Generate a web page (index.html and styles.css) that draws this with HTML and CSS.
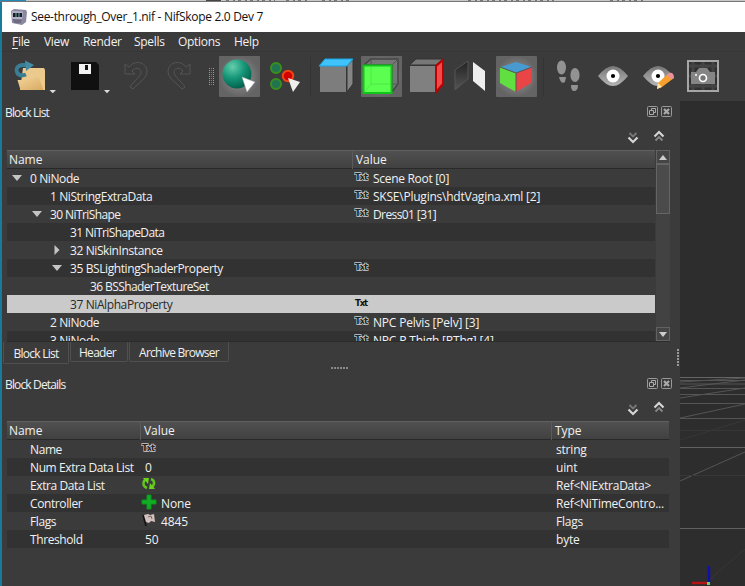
FILE: index.html
```
<!DOCTYPE html>
<html lang="en">
<head>
<meta charset="utf-8">
<title>See-through_Over_1.nif - NifSkope 2.0 Dev 7</title>
<link rel="stylesheet" href="styles.css">
</head>
<body>
<svg width="0" height="0" class="defs">
  <defs>
    <radialGradient id="pressed"><stop offset="0" stop-color="#999"/><stop offset="1" stop-color="#646464"/></radialGradient>
    <radialGradient id="ball" cx=".35" cy=".25" r=".8"><stop offset="0" stop-color="#65cfae"/><stop offset=".5" stop-color="#169678"/><stop offset="1" stop-color="#005c49"/></radialGradient>
    <linearGradient id="metal" x2="0" y2="1"><stop offset="0" stop-color="#777"/><stop offset="1" stop-color="#b5b5b5"/></linearGradient>
    <linearGradient id="dark" x2="0" y2="1"><stop offset="0" stop-color="#222"/><stop offset="1" stop-color="#555"/></linearGradient>
    <linearGradient id="folder" x2="1" y2="1"><stop offset="0" stop-color="#f2d49a"/><stop offset="1" stop-color="#d9aa62"/></linearGradient>
    <symbol id="txt" viewBox="0 0 16 12"><text x="1" y="9" class="txt-outline" textLength="13">Txt</text></symbol>
    <symbol id="txt-plain" viewBox="0 0 16 12"><text x="1" y="9" class="txt-plain" textLength="13">Txt</text></symbol>
    <symbol id="float" viewBox="0 0 11 11"><rect x=".5" y=".5" width="10" height="10" rx="1" fill="none" stroke="#999"/><path d="M4.500 4V2.500H8.500V6.500H7M2.500 4.500H6.500V8.500H2.500Z" fill="none" stroke="#aaa"/></symbol>
    <symbol id="close" viewBox="0 0 11 11"><rect x=".5" y=".5" width="10" height="10" rx="1" fill="none" stroke="#999"/><path d="M3 3L8 8M8 3L3 8" stroke="#aaa" stroke-width="2.200"/></symbol>
    <symbol id="down" viewBox="0 0 12 12"><path d="M2.500 1L6 4.500L9.500 1" fill="none" stroke="#777" stroke-width="1.800"/><path d="M1.500 5.500L6 10L10.500 5.500" fill="none" stroke="#d5d5d5" stroke-width="2.200"/></symbol>
    <symbol id="up" viewBox="0 0 12 12"><path d="M2.500 10.500L6 7L9.500 10.500" fill="none" stroke="#888" stroke-width="1.800"/><path d="M1.500 6.500L6 2L10.500 6.500" fill="none" stroke="#d5d5d5" stroke-width="2.200"/></symbol>
    <symbol id="expanded" viewBox="0 0 10 8"><path d="M0 1H10L5 7Z" fill="#c4c4c4"/></symbol>
    <symbol id="collapsed" viewBox="0 0 10 10"><path d="M2.500 0V10L7.500 5Z" fill="#c4c4c4"/></symbol>
  </defs>
</svg>
<div class="desktop">
  <svg class="behind" width="745" height="2"><rect width="745" height="2" fill="#c8c9c6"/><path d="M206 0H221V2H206Z" fill="#46454a"/><path d="M0 0H26V2H0Z" fill="#2389b9"/><path d="M226 .5H275M286 .5H308M322 .5H350M468 .5H554M610 .5H643" stroke="#777" stroke-dasharray="3 4 2 3"/><path d="M0 1.500H745" stroke="#777"/></svg>
  <div class="window">
    <header class="titlebar">
      <svg width="18" height="18" viewBox="0 0 18 18"><path d="M1 3L4 1L16 2L17 4L16 14L12 17L2 15Z" fill="#8a87a0"/><path d="M2 3L13 3.500L12 12L2 11Z" fill="#b5b2c5"/><path d="M3 5L12 5V9L3 9Z" fill="#111e24"/><path d="M6 5V9M9 5V9" stroke="#79a7a5"/><path d="M3 12H12M4 14H11" stroke="#545064"/></svg>
      <span>See-through_Over_1.nif - NifSkope 2.0 Dev 7</span>
    </header>
    <nav class="menu"><span class="m1"><u>F</u>ile</span><span class="m2">View</span><span class="m3">Render</span><span class="m4">Spells</span><span class="m5">Options</span><span class="m6">Help</span></nav>
    <div class="toolbar">
      <svg width="57" height="49" viewBox="2 52 57 49"><path d="M23 68H44L45 70V90H20Z" fill="#ecca8e"/><path d="M17.500 80H29L31 77.500H39L43.500 90H20.500Z" fill="url(#folder)"/><path d="M26 74.500C17 78 14 69 19 66C22 64 25 65 28 65.500" fill="none" stroke="#397e94" stroke-width="4"/><path d="M25 60.500L34 65L26 71Z" fill="#438ca3"/><path d="M49.500 90H56L52.800 93.300Z" fill="#ddd"/></svg>
      <svg width="54" height="49" viewBox="59 52 54 49"><path d="M71 62H96L99 65V90H71Z" fill="#101010"/><path d="M79 64H91V74H79Z" fill="#f2f2f2"/><path d="M85 65H88V70H85Z" fill="#111"/><path d="M104 90H110L107 93.300Z" fill="#ddd"/></svg>
      <svg width="45" height="49" viewBox="113 52 45 49"><path d="M125 64V74H135L132 71C136 66 142 69 141 73C140 77 134 81 130 87L133 89C138 83 147 79 147 71C146 61 134 60 129 67Z" fill="none" stroke="#555"/></svg>
      <svg width="44" height="49" viewBox="158 52 44 49"><path d="M190 64V74H180L183 71C179 66 173 69 174 73C175 77 181 81 185 87L182 89C177 83 168 79 168 71C169 61 181 60 186 67Z" fill="none" stroke="#555"/></svg>
      <svg width="17" height="49" viewBox="202 52 17 49"><path d="M209.500 68V86M213.500 68V86" stroke="#999" stroke-dasharray="1 1"/><path d="M211.500 68V86" stroke="#777" stroke-dasharray="1 1"/></svg>
      <svg width="42" height="49" viewBox="219 52 42 49"><rect x="219" y="56" width="41" height="41" rx="1" fill="url(#pressed)"/><circle cx="237" cy="74" r="14.500" fill="url(#ball)"/><path d="M242 77L255 82L247 92Z" fill="#fff" stroke="#aaa" stroke-width=".5"/></svg>
      <svg width="51" height="49" viewBox="261 52 51 49"><circle cx="276" cy="68" r="5" fill="#217354" stroke="#38901b" stroke-width="2"/><circle cx="276" cy="84" r="5" fill="#217354" stroke="#38901b" stroke-width="2"/><circle cx="288" cy="76" r="5.200" fill="#d30000" stroke="#f04412" stroke-width="2"/><path d="M288 78L300 82L293 92Z" fill="#eee"/><path d="M310.500 57V96" stroke="#343434"/></svg>
      <svg width="46" height="49" viewBox="312 52 46 49"><path d="M347 66L353 59V84L347 92Z" fill="#858585" stroke="#333"/><path d="M320 66H346V92H320Z" fill="#7d7d7d"/><path d="M319 66L325 59H353L347 66Z" fill="#40c2fa" stroke="#16a4e3"/></svg>
      <svg width="47" height="49" viewBox="358 52 47 49"><rect x="361" y="56" width="41" height="41" rx="1" fill="url(#pressed)"/><path d="M364 65L371 59H398V84L392 92V65Z" fill="#777" stroke="#444" stroke-width="1.500"/><path d="M371 60V84H398M371 84L364 92M398 59L392 65" fill="none" stroke="#555"/><rect x="363.500" y="65.500" width="28" height="27.500" fill="#5aff4f" stroke="#10c51a" stroke-width="2"/><path d="M371 67V84H390M371 84L365 91" stroke="#51e846" fill="none"/></svg>
      <svg width="45" height="49" viewBox="405 52 45 49"><path d="M409.500 65L416 59H443L436 65Z" fill="#777" stroke="#333"/><path d="M410 66H435V92H410Z" fill="#808080"/><path d="M436 66L443 60V84L436 92Z" fill="#f34949" stroke="#bd0000" stroke-width="2"/></svg>
      <svg width="43" height="49" viewBox="450 52 43 49"><path d="M455 70L468 61V79L455 90Z" fill="url(#dark)" stroke="#555"/><path d="M473 62L485 71V91L473 81Z" fill="#eee"/></svg>
      <svg width="51" height="49" viewBox="493 52 51 49"><rect x="496" y="56" width="41" height="41" rx="1" fill="url(#pressed)"/><path d="M500 67L516 62L532 67L516 73Z" fill="#479bd0"/><path d="M500 67L516 73V92L500 83Z" fill="#61df40"/><path d="M532 67L516 73V92L531 83Z" fill="#e94446"/><path d="M500 67L516 73L532 67M516 73V92" stroke="#555" fill="none"/><path d="M543.500 57V96" stroke="#343434"/></svg>
      <svg width="45" height="49" viewBox="544 52 45 49" fill="#929292"><ellipse cx="561.500" cy="67.500" rx="4.500" ry="7"/><path d="M559 77L566 77L565 82Q561 85 559 77Z"/><ellipse cx="575" cy="75" rx="4.600" ry="7"/><path d="M571 85H578Q578 91 574 91Q571 91 571 85Z"/></svg>
      <svg width="48" height="49" viewBox="589 52 48 49"><path d="M598 76Q606 66 613 66Q620 66 628 76Q620 86 613 86Q606 86 598 76Z" fill="url(#metal)"/><circle cx="613" cy="76" r="6.500" fill="#fff"/><circle cx="613" cy="76" r="2.100"/></svg>
      <svg width="44" height="49" viewBox="637 52 44 49"><path d="M643 76Q651 66 658 66Q665 66 673 76Q665 86 658 86Q651 86 643 76Z" fill="url(#metal)"/><circle cx="658" cy="76" r="6.500" fill="#fff"/><circle cx="658" cy="76" r="2.100"/><path d="M657 89L658 83L669 73L674 78L662 87Z" fill="#f7a02d"/><path d="M669 73Q674 72 674 78L671 79L667 75Z" fill="#e9929c"/><path d="M657 89L658 83L662 87Z" fill="#ffe3aa"/></svg>
      <svg width="64" height="49" viewBox="681 52 64 49"><rect x="688" y="61" width="30" height="30" fill="#303030"/><path d="M693 62V90M703 62V90M713 62V90M689 66H717M689 76H717M689 86H717" stroke="#444" stroke-width="3"/><rect x="688" y="61" width="30" height="30" fill="none" stroke="#a6a6a6" stroke-width="2"/><path d="M691 72H696L699 68H707L710 72H715V84H691Z" fill="#858585"/><circle cx="703" cy="78" r="3.500" fill="#777" stroke="#fff" stroke-width="1.700"/><circle cx="696" cy="75" r="1" fill="#fff"/></svg>
    </div>
    <main class="body">
      <section class="docks">
        <div class="dockhead first"><span>Block List</span><svg width="11" height="11"><use href="#float"/></svg><svg width="11" height="11"><use href="#close"/></svg></div>
        <div class="arrows a1"><svg width="12" height="12"><use href="#down"/></svg><svg width="12" height="12"><use href="#up"/></svg></div>
        <div class="list">
          <div class="tree">
            <div class="th"><span>Name</span><span>Value</span></div>
            <div class="row"><div class="lv0"><svg width="10" height="8"><use href="#expanded"/></svg>0 NiNode</div><div><svg width="16" height="12"><use href="#txt"/></svg>Scene Root [0]</div></div>
            <div class="row"><div class="lv1">1 NiStringExtraData</div><div class="path"><svg width="16" height="12"><use href="#txt"/></svg>SKSE\Plugins\hdtVagina.xml [2]</div></div>
            <div class="row"><div class="lv1 snug"><svg width="10" height="8"><use href="#expanded"/></svg>30 NiTriShape</div><div class="snug"><svg width="16" height="12"><use href="#txt"/></svg>Dress01 [31]</div></div>
            <div class="row"><div class="lv2 snug">31 NiTriShapeData</div><div></div></div>
            <div class="row"><div class="lv2"><svg width="10" height="10"><use href="#collapsed"/></svg>32 NiSkinInstance</div><div></div></div>
            <div class="row"><div class="lv2"><svg width="10" height="8"><use href="#expanded"/></svg>35 BSLightingShaderProperty</div><div><svg width="16" height="12"><use href="#txt"/></svg></div></div>
            <div class="row"><div class="lv3 snug">36 BSShaderTextureSet</div><div></div></div>
            <div class="row selected"><div class="lv2">37 NiAlphaProperty</div><div><svg width="16" height="12"><use href="#txt-plain"/></svg></div></div>
            <div class="row"><div class="lv1">2 NiNode</div><div class="npc"><svg width="16" height="12"><use href="#txt"/></svg>NPC Pelvis [Pelv] [3]</div></div>
            <div class="row"><div class="lv1">3 NiNode</div><div class="npc"><svg width="16" height="12"><use href="#txt"/></svg>NPC R Thigh [RThg] [4]</div></div>
          </div>
          <div class="scroll"><div class="sb"><svg width="8" height="5"><path d="M0 5L4 0L8 5Z" fill="#ccc"/></svg></div><div class="thumb"></div><div class="track"></div><div class="sb"><svg width="8" height="5"><path d="M0 0H8L4 5Z" fill="#ccc"/></svg></div></div>
        </div>
        <div class="tabs"><span class="active">Block List</span><span class="header-tab">Header</span><span class="archive">Archive Browser</span><svg width="3" height="18"><path d="M1 0V18" stroke="#999" stroke-width="2" stroke-dasharray="2 1"/></svg></div>
        <div class="split"><svg width="18" height="2"><path d="M0 1H18" stroke="#888" stroke-width="2" stroke-dasharray="2 1"/></svg></div>
        <div class="dockhead"><span>Block Details</span><svg width="11" height="11"><use href="#float"/></svg><svg width="11" height="11"><use href="#close"/></svg></div>
        <div class="arrows a2"><svg width="12" height="12"><use href="#down"/></svg><svg width="12" height="12"><use href="#up"/></svg></div>
        <div class="details">
          <div class="th"><span>Name</span><span>Value</span><span>Type</span></div>
          <div class="row"><div>Name</div><div><svg width="16" height="12"><use href="#txt"/></svg></div><div>string</div></div>
          <div class="row"><div>Num Extra Data List</div><div class="num">0</div><div>uint</div></div>
          <div class="row"><div>Extra Data List</div><div><svg width="16" height="14" viewBox="0 0 16 14"><path d="M6 11Q1 9 3 4L5 2M10 2Q15 4 12 9L10 11" fill="none" stroke="#5fc61d" stroke-width="2.600"/><path d="M2 1H8L7 7ZM14 12H8L9 6Z" fill="#6bd31f"/></svg></div><div class="ref">Ref&lt;NiExtraData&gt;</div></div>
          <div class="row"><div>Controller</div><div><svg class="plus" width="16" height="16" viewBox="0 0 16 16"><path d="M6 1H10V6H15V10H10V15H6V10H1V6H6Z" fill="#11ae25" stroke="#0c9420"/></svg>None</div><div class="ref">Ref&lt;NiTimeContro...</div></div>
          <div class="row"><div>Flags</div><div><svg width="16" height="14" viewBox="0 0 16 14"><path d="M2 2L5 13" stroke="#111" stroke-width="1.500"/><path d="M3 2L7 1L9 2L13 1L14 9L10 8L8 10L5 9Z" fill="#d4c1be"/><path d="M7 4L10 3L11 6" fill="none" stroke="#746462"/></svg>4845</div><div>Flags</div></div>
          <div class="row"><div>Threshold</div><div class="num">50</div><div>byte</div></div>
        </div>
      </section>
      <svg class="viewport" width="65" height="485" viewBox="680 101 65 485"><path fill="#2d2d2d" d="M680 101H745V586H680Z"/><g fill="none" stroke="#555"><path stroke="#656565" d="M680 377.500H745"/><path d="M680 380.500H745M680 384H745M680 388.500H745M680 394.500H745M680 403.500H745M680 418.500H745"/><path d="M680 382L745 378M680 388L745 380M680 398L745 388M680 418L745 404M680 481L745 452"/><path stroke="#606060" d="M680 447.500H745M680 528.500H745"/><path stroke="#373737" d="M680 430.500H745M680 475.500H745M680 440L745 420M709 580L745 549"/></g><path d="M692 583H707" stroke="#b51212" stroke-width="2.500"/><path d="M709 566V582" stroke="#1010b0" stroke-width="2.500"/><path d="M707 582H710V585H707Z" fill="#62d862"/></svg>
    </main>
  </div>
</div>
</body>
</html>
```
FILE: styles.css
```
* { box-sizing: border-box; }
body { margin: 0; width: 745px; height: 586px; overflow: hidden; background: #3b3b3b; font: 12px/18px "Open Sans", "Noto Sans", sans-serif; color: #f1f1f1; letter-spacing: -0.3px; white-space: nowrap; }
svg { display: block; flex: none; }
.defs { position: absolute; }
.desktop { height: 586px; display: flex; flex-direction: column; }
.window { height: 584px; border-left: 2px solid #197b9c; }
.titlebar { height: 30px; background: #fff; color: #111; display: flex; align-items: center; padding-left: 8px; }
.titlebar span { margin-left: 3px; letter-spacing: -0.32px; }
.menu { height: 20px; line-height: 20px; display: flex; border-bottom: 1px solid #373737; }
.menu u { text-underline-offset: 2px; }
.m1 { width: 32px; margin-left: 10px; }
.m2 { width: 39px; }
.m3 { width: 51px; }
.m4 { width: 44px; }
.m5 { width: 56px; }
.toolbar { height: 49px; display: flex; }
.body { height: 485px; display: flex; }
.docks { width: 678px; }
.dockhead { height: 24px; display: flex; align-items: center; gap: 3px; padding: 0 8px 0 3px; }
.dockhead.first { height: 23px; }
.dockhead span { flex: 1; letter-spacing: -0.85px; padding-top: 1px; }
.dockhead svg { margin-top: -2px; }
.arrows { display: flex; justify-content: flex-end; align-items: center; gap: 14px; padding-right: 15px; height: 26px; }
.arrows.a2 { height: 25px; }
.arrows svg { margin-top: -3px; }
.arrows svg:first-child { margin-top: 2px; }
.list { height: 192px; display: flex; margin: 0 10px 0 5px; border-bottom: 1px solid #2b2b2b; }
.tree { width: 648px; margin-right: 1px; overflow: hidden; }
.th { height: 19px; background: linear-gradient(#505050, #414141); border-top: 1px solid #606060; border-bottom: 1px solid #292929; display: grid; grid-template-columns: 345px 1fr; line-height: 18px; letter-spacing: -0.05px; }
.th span { padding-left: 2px; }
.th span + span { border-left: 1px solid #5b5b5b; padding-left: 3px; }
.row { height: 18px; display: grid; grid-template-columns: 345px 1fr; letter-spacing: -0.4px; }
.row:nth-child(odd) { background: #323232; }
.row > div { display: flex; align-items: center; height: 18px; padding-top: 2px; }
.row > div + div { padding-left: 2px; letter-spacing: -0.3px; }
.row > div + div > svg { margin: -4px 3px 0 0; }
.row > .path { letter-spacing: -0.23px; }
.row > .npc { letter-spacing: -0.2px; }
.row > .snug { letter-spacing: -0.6px; }
.lv0 { padding-left: 23px; }
.lv1 { padding-left: 43px; }
.lv2 { padding-left: 63px; }
.lv3 { padding-left: 83px; }
.tree .row > div:first-child > svg { margin: -3px 8px 0 -18px; }
.tree .row.selected { background: #cacaca; color: #292929; }
.txt-outline { font: bold 8.5px "DejaVu Sans", sans-serif; fill: #222; stroke: #ccc; stroke-width: 1.4px; paint-order: stroke; letter-spacing: 0; }
.txt-plain { font: bold 8.5px "DejaVu Sans", sans-serif; fill: #111; letter-spacing: 0; }
.scroll { width: 14px; display: flex; flex-direction: column; background: #424242; }
.sb { height: 14px; border: 1px solid #626262; display: flex; align-items: center; justify-content: center; background: #454545; }
.thumb { height: 50px; border: 1px solid #656565; background: #4b4b4b; }
.track { flex: 1; }
.tabs { height: 24px; display: flex; align-items: flex-start; padding-left: 1px; }
.tabs span { height: 20px; line-height: 22px; text-align: center; border: 1px solid #505050; border-top: 0; border-radius: 0 0 2px 2px; margin-right: 1px; }
.tabs .active { width: 66px; height: 22px; line-height: 24px; letter-spacing: -0.75px; }
.tabs .header-tab { width: 58px; letter-spacing: -0.7px; padding-right: 3px; }
.tabs .archive { width: 100px; letter-spacing: -0.75px; }
.tabs svg { margin: 7px 0 0 auto; }
.split { height: 6px; padding: 1px 0 0 329px; }
.details { margin: 0 11px 0 5px; }
.details .th, .details .row { grid-template-columns: 133px 411px 1fr; }
.details .row > div:first-child { padding-left: 23px; }
.details .row > div { letter-spacing: -0.4px; }
.details .row > div + div { padding-left: 1px; letter-spacing: -0.1px; }
.details .row > div + div > svg { margin-right: 4px; }
.details .row > div.num { padding-left: 5px; }
.details .row > div:last-child { padding-left: 5px; letter-spacing: -0.2px; }
.details .row > div.ref:last-child { letter-spacing: -0.25px; }
```
